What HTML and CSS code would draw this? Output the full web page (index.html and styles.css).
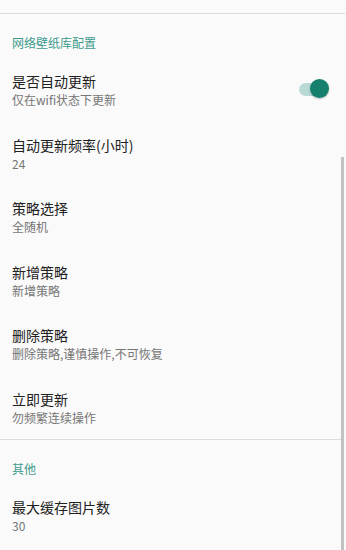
FILE: index.html
```
<!DOCTYPE html>
<html>
<head>
<meta charset="utf-8">
<link rel="stylesheet" href="styles.css">
</head>
<body>
<div class="screen">
  <div class="top-rest"></div>
  <section class="category">
    <div class="cat-title">网络壁纸库配置</div>
    <div class="pref">
      <div class="texts">
        <div class="title">是否自动更新</div>
        <div class="summary">仅在wifi状态下更新</div>
      </div>
      <div class="switch"><span class="track"></span><span class="thumb"></span></div>
    </div>
    <div class="pref">
      <div class="texts">
        <div class="title">自动更新频率(小时)</div>
        <div class="summary">24</div>
      </div>
    </div>
    <div class="pref">
      <div class="texts">
        <div class="title">策略选择</div>
        <div class="summary">全随机</div>
      </div>
    </div>
    <div class="pref">
      <div class="texts">
        <div class="title">新增策略</div>
        <div class="summary">新增策略</div>
      </div>
    </div>
    <div class="pref">
      <div class="texts">
        <div class="title">删除策略</div>
        <div class="summary">删除策略,谨慎操作,不可恢复</div>
      </div>
    </div>
    <div class="pref">
      <div class="texts">
        <div class="title">立即更新</div>
        <div class="summary">勿频繁连续操作</div>
      </div>
    </div>
  </section>
  <section class="category divided">
    <div class="cat-title">其他</div>
    <div class="pref">
      <div class="texts">
        <div class="title">最大缓存图片数</div>
        <div class="summary">30</div>
      </div>
    </div>
  </section>
  <div class="scrollbar"></div>
</div>
</body>
</html>
```
FILE: styles.css
```
html, body {
  margin: 0;
  padding: 0;
  background: #fafafa;
}
body {
  font-family: "Noto Sans CJK SC", "Roboto", sans-serif;
  width: 346px;
  height: 550px;
  overflow: hidden;
}
.screen {
  position: relative;
  height: 550px;
  overflow: hidden;
}
.top-rest {
  height: 13px;
  border-bottom: 1px solid #dcdcdc;
  margin-right: 1px;
}
.category {
  padding-top: 21px;
}
.category.divided {
  border-top: 1px solid #dcdcdc;
  margin-right: 5px;
}
.cat-title {
  font-size: 12px;
  line-height: 16px;
  color: #3e9a8d;
  padding-left: 12px;
  margin-bottom: 7.25px;
}
.pref {
  display: flex;
  align-items: center;
  padding: 12.75px 0;
}
.texts {
  flex: 1;
  padding-left: 12px;
}
.title {
  font-size: 14px;
  line-height: 20px;
  color: #212121;
}
.summary {
  font-size: 12px;
  line-height: 18px;
  color: #757575;
}
.switch {
  position: relative;
  width: 30px;
  height: 20px;
  margin-right: 17px;
}
.track {
  position: absolute;
  left: 0;
  top: 3px;
  width: 26px;
  height: 13px;
  border-radius: 7px;
  background: #b9d9d4;
}
.thumb {
  position: absolute;
  right: 0;
  top: -1px;
  width: 19px;
  height: 19px;
  border-radius: 50%;
  background: #16806f;
  box-shadow: 0 1px 2px rgba(0,0,0,0.25);
}
.scrollbar {
  position: absolute;
  right: 2px;
  top: 157px;
  width: 3px;
  height: 393px;
  background: #c2c2c2;
}
```
